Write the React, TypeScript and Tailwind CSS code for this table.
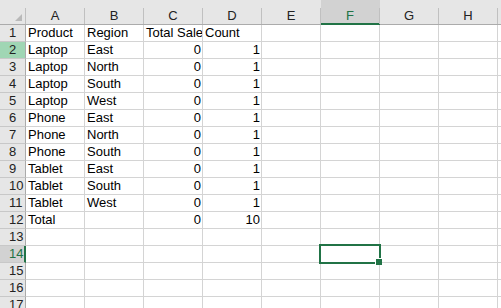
import React from 'react';

const COLS = ['A', 'B', 'C', 'D', 'E', 'F', 'G', 'H', 'I'];

type Cell = string | number | null;

// visible sheet contents (columns A-D)
const DATA: Cell[][] = [
  ['Product', 'Region', 'Total Sales', 'Count'],
  ['Laptop', 'East', 0, 1],
  ['Laptop', 'North', 0, 1],
  ['Laptop', 'South', 0, 1],
  ['Laptop', 'West', 0, 1],
  ['Phone', 'East', 0, 1],
  ['Phone', 'North', 0, 1],
  ['Phone', 'South', 0, 1],
  ['Tablet', 'East', 0, 1],
  ['Tablet', 'South', 0, 1],
  ['Tablet', 'West', 0, 1],
  ['Total', null, 0, 10],
  [], [], [], [], [],
];

const SELECTED_COL = 'F';
const SELECTED_ROW = 14;

const RowHeader: React.FC<{ n: number }> = ({ n }) => {
  const selected = n === SELECTED_ROW;
  let cls = 'bg-[#e6e6e6] border-r border-r-[#ababab] text-[#222]';
  if (selected) cls = 'bg-[#d2d2d2] border-r-2 border-r-[#217346] text-[#217346]';
  else if (n === 2) cls = 'bg-[#a0d6b4] border-r border-r-[#ababab] text-[#222]';
  return (
    <div className={`w-[26px] h-[17px] shrink-0 border-b border-b-[#c8c8c8] pl-[9px] leading-[16px] ${cls}`}>
      {n}
    </div>
  );
};

const SheetCell: React.FC<{ value: Cell }> = ({ value }) => {
  const numeric = typeof value === 'number';
  return (
    <div
      className={`w-[59px] h-[17px] shrink-0 border-r border-b border-[#d4d4d4] overflow-hidden whitespace-nowrap leading-[16px] text-black ${
        numeric ? 'text-right pr-[1px]' : 'pl-[2px]'
      }`}
    >
      {value}
    </div>
  );
};

export default function App() {
  return (
    <div
      className="relative w-[501px] h-[308px] overflow-hidden bg-white text-[13px]"
      style={{ fontFamily: '"Liberation Sans", Arial, sans-serif' }}
    >
      {/* Column headers */}
      <div className="flex">
        <div className="relative w-[26px] h-[25px] shrink-0 bg-[#e6e6e6] border-b border-b-[#ababab]">
          <svg className="absolute left-0 top-0" width="26" height="24" viewBox="0 0 26 24">
            <polygon points="22,14 22,21 15,21" fill="#b9b9b9" />
          </svg>
          <div className="absolute right-0 top-[8px] h-[16px] w-px bg-[#c0c0c0]" />
        </div>
        {COLS.map((c) => {
          const selected = c === SELECTED_COL;
          return (
            <div
              key={c}
              className={`w-[59px] h-[25px] shrink-0 pt-[8px] ${
                selected
                  ? 'bg-[#d2d2d2] border-b-2 border-b-[#217346] text-[#217346]'
                  : 'bg-[#e6e6e6] border-b border-b-[#ababab] text-[#222]'
              }`}
            >
              <div className="h-[16px] border-r border-r-[#c0c0c0] text-center leading-[16px]">{c}</div>
            </div>
          );
        })}
      </div>

      {/* Rows */}
      {DATA.map((row, i) => (
        <div key={i} className="flex">
          <RowHeader n={i + 1} />
          {COLS.map((c, j) => (
            <SheetCell key={c} value={row[j] ?? null} />
          ))}
        </div>
      ))}

      {/* Active cell F14 */}
      <div className="absolute left-[319px] top-[244px] w-[62px] h-[20px] border-2 border-[#217346]" />
      <div className="absolute left-[375px] top-[258px] w-[7px] h-[7px] bg-[#217346] border-l border-t border-white" />
    </div>
  );
}
